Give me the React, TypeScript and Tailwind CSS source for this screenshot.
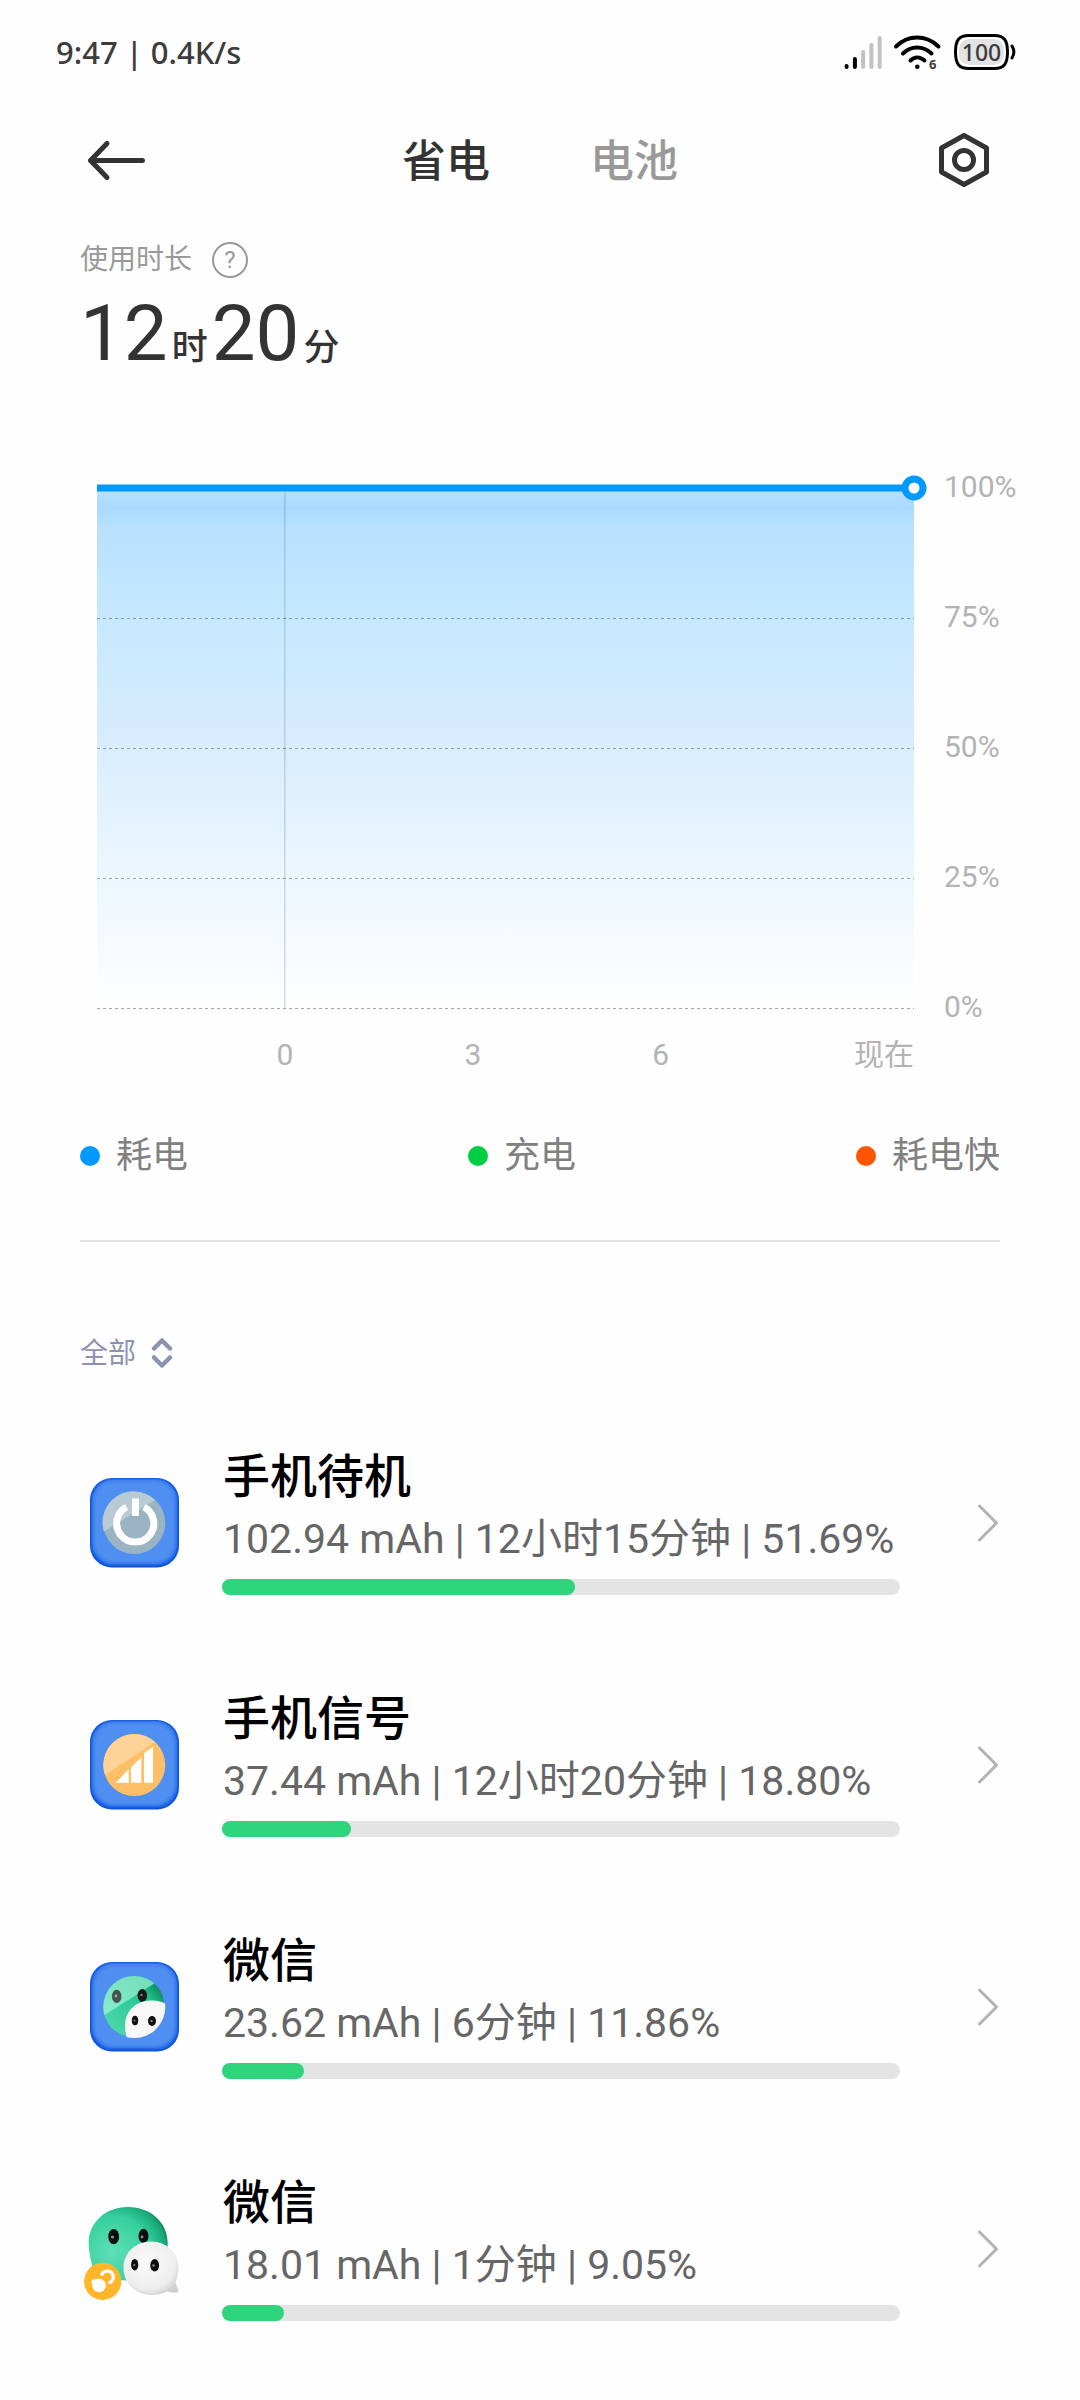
import type { ReactNode } from 'react'

type Usage = {
    id: string
    name: string
    detail: string
    fill: number
    icon: ReactNode
}

const BlueTile = () => (
    <>
        <rect x="10" y="9" width="89" height="89.5" rx="22" fill="#0a55e2"/>
        <rect x="11.2" y="9.6" width="86.6" height="87" rx="21.5" fill="#2468e8"/>
        <rect x="12.4" y="10.4" width="84.2" height="84.6" rx="21" fill="#3a7dec"/>
        <rect x="14" y="11.6" width="81" height="82" rx="20" fill="#4787ee"/>
        <rect x="16" y="14" width="77" height="78" rx="18" fill="#4f8ff1"/>
    </>
)

const StandbyIcon = () => (
    <svg viewBox="0 0 108 108" className="size-27 shrink-0" aria-hidden="true">
        <BlueTile/>
        <circle cx="54.3" cy="54" r="31" fill="#9bb4c4"/>
        <path d="M23.9 62.5 A31 31 0 0 1 75 31 Z" fill="#b8cad4"/>
        <path d="M46.5 38 A18.6 18.6 0 1 0 64 38" fill="none" stroke="#fff" strokeWidth="7"/>
        <rect x="52" y="29.5" width="7" height="17.5" fill="#fff"/>
    </svg>
)

const SignalIcon = () => (
    <svg viewBox="0 0 108 108" className="size-27 shrink-0" aria-hidden="true">
        <BlueTile/>
        <circle cx="54.3" cy="54" r="31" fill="#febf66"/>
        <path d="M25 64 A31 31 0 0 1 75 31 Z" fill="#ffd297"/>
        <path d="M35.7 71.7 L48.7 58.3 V71.7 Z M51 56.3 L61.3 46.3 V71.7 H51 Z M64 42.3 L73 35.7 V71.7 H64 Z" fill="#fff"/>
    </svg>
)

const WechatTileIcon = () => (
    <svg viewBox="0 0 108 108" className="size-27 shrink-0" aria-hidden="true">
        <defs>
            <clipPath id="face">
                <circle cx="54.3" cy="54" r="31"/>
            </clipPath>
            <linearGradient id="faceGreen" x1="0" y1="1" x2="1" y2="0.2">
                <stop offset="0" stopColor="#56dcae"/>
                <stop offset="0.75" stopColor="#22c592"/>
                <stop offset="1" stopColor="#0b7a50"/>
            </linearGradient>
            <linearGradient id="faceShine" x1="0" y1="1" x2="1" y2="0">
                <stop offset="0" stopColor="#8aeccd"/>
                <stop offset="1" stopColor="#6fdcb7"/>
            </linearGradient>
        </defs>
        <BlueTile/>
        <g clipPath="url(#face)">
            <circle cx="53.5" cy="53" r="31" fill="url(#faceGreen)"/>
            <path d="M20 65 L75 30 L60 15 H20 Z" fill="url(#faceShine)"/>
            <ellipse cx="36.7" cy="43.3" rx="4.8" ry="6.6" fill="#46544f"/>
            <ellipse cx="62.3" cy="42.5" rx="4.8" ry="6.4" fill="#141a18"/>
            <circle cx="36" cy="43" r="1.4" fill="#9aa8a3"/>
            <circle cx="61.5" cy="42" r="1.3" fill="#777"/>
            <path d="M86 51 C78 46 62 46 53 54 C44 62 43 75 48 88 H90 V51 Z" fill="#f8f8f8"/>
            <ellipse cx="55" cy="67.5" rx="3.2" ry="4.8" fill="#111"/>
            <ellipse cx="72" cy="68" rx="4" ry="5" fill="#111"/>
            <circle cx="54.5" cy="67.5" r="1" fill="#888"/>
            <circle cx="71.5" cy="68" r="1.2" fill="#888"/>
        </g>
    </svg>
)

const WechatIcon = () => (
    <svg viewBox="0 0 108 108" className="size-27 shrink-0" aria-hidden="true">
        <defs>
            <radialGradient id="bigBubble" cx="0.3" cy="0.6" r="0.8">
                <stop offset="0" stopColor="#5fe0b8"/>
                <stop offset="0.6" stopColor="#35cf9d"/>
                <stop offset="0.85" stopColor="#16a777"/>
                <stop offset="1" stopColor="#075236"/>
            </radialGradient>
            <radialGradient id="smallBubble" cx="0.45" cy="0.4" r="0.65">
                <stop offset="0" stopColor="#fafafa"/>
                <stop offset="0.75" stopColor="#eeeeee"/>
                <stop offset="1" stopColor="#cfcfcf"/>
            </radialGradient>
        </defs>
        <path d="M48 12 C70 12 87.7 27 87.7 48 C87.7 70 70 85.5 46 85.5 C36 85.5 24 82 12 76 C13.5 70 8.7 62 8.7 48 C8.7 27 26 12 48 12 Z" fill="url(#bigBubble)"/>
        <ellipse cx="33.7" cy="41.7" rx="5.4" ry="7.6" fill="#0a0f0d"/>
        <ellipse cx="63.5" cy="41" rx="5" ry="7.2" fill="#0a0f0d"/>
        <circle cx="32.5" cy="42" r="1.6" fill="#8a8f8d"/>
        <circle cx="62" cy="42" r="1.4" fill="#8a8f8d"/>
        <path d="M71 46.5 C87 46.5 98.5 58 98.5 73 C98.5 79 97 84 95.5 87 C96 91 98.5 94 98.5 96 C98.5 98.5 93 98 87.5 96.5 C82 99 77 100 71 100 C55 100 43.5 88 43.5 73 C43.5 58 55 46.5 71 46.5 Z" fill="url(#smallBubble)"/>
        <ellipse cx="54.7" cy="69.7" rx="3.6" ry="5.8" fill="#0c0c0c"/>
        <ellipse cx="74.7" cy="70.3" rx="4.4" ry="6.2" fill="#0c0c0c"/>
        <circle cx="54.2" cy="70" r="1.1" fill="#8a8a8a"/>
        <circle cx="73.5" cy="70.5" r="1.3" fill="#8a8a8a"/>
        <circle cx="22.7" cy="86.3" r="18.6" fill="#ffb629"/>
        <circle cx="19" cy="90.5" r="6.8" fill="#fff"/>
        <circle cx="14.3" cy="87" r="2.8" fill="#fff"/>
        <path d="M21.5 80.5 A6 6 0 1 1 28.5 88" fill="none" stroke="#fff" strokeWidth="3.4"/>
    </svg>
)

const usages: Usage[] = [
    { id: 'standby', name: '手机待机', detail: '102.94 mAh | 12小时15分钟 | 51.69%', fill: 52.1, icon: <StandbyIcon/> },
    { id: 'signal', name: '手机信号', detail: '37.44 mAh | 12小时20分钟 | 18.80%', fill: 19, icon: <SignalIcon/> },
    { id: 'wechat', name: '微信', detail: '23.62 mAh | 6分钟 | 11.86%', fill: 12.1, icon: <WechatTileIcon/> },
    { id: 'wechat-dual', name: '微信', detail: '18.01 mAh | 1分钟 | 9.05%', fill: 9.2, icon: <WechatIcon/> },
]

const StatusBar = () => (
    <div className="flex h-26 items-center justify-between pr-16 pl-14 text-[#3c3c3c]">
        <span className="font-['Noto_Sans',sans-serif] text-[31px] font-medium">9:47 | 0.4K/s</span>
        <svg width="172" height="40" viewBox="0 0 172 40" aria-hidden="true">
            <g strokeWidth="4" strokeLinecap="round">
                <path d="M2.6 34 V35 M10.9 27 V35" stroke="#000"/>
                <path d="M19.1 20 V35 M27.4 13 V35 M35.7 6 V35" stroke="#c2c2c2"/>
            </g>
            <g fill="none" stroke="#000" strokeWidth="4" strokeLinecap="round">
                <path d="M52 14.5 C64 2.5 82 2.5 94.5 14.5"/>
                <path d="M59 21.5 C67 13.5 79 13.5 87.5 21.5"/>
                <path d="M66.5 28.5 C70.5 24.5 76 24.5 80.5 28.5"/>
            </g>
            <circle cx="73.3" cy="34.7" r="2.3" fill="#000"/>
            <text x="85" y="37" fill="#3c3c3c" className="font-['Noto_Sans',sans-serif] text-[13px] font-bold">6</text>
            <path d="M125 3.5 H150 C160 3.5 163.5 8 163.5 20 C163.5 32 160 36.5 150 36.5 H125 C115 36.5 111.5 32 111.5 20 C111.5 8 115 3.5 125 3.5 Z" fill="#fff" stroke="#000" strokeWidth="3"/>
            <rect x="115" y="7" width="45" height="26" rx="10" fill="#e3e3e3"/>
            <path d="M168 14 C170.5 18 170.5 22 168 26" fill="none" stroke="#000" strokeWidth="3" strokeLinecap="round"/>
            <text x="137.5" y="29" textAnchor="middle" fill="#3c3c3c" className="font-['Noto_Sans',sans-serif] text-[23px] font-medium">100</text>
        </svg>
    </div>
)

const Header = () => (
    <header className="flex h-28 items-center justify-between px-20">
        <button type="button" aria-label="返回" className="w-20">
            <svg width="72" height="56" viewBox="0 0 72 56" fill="none" stroke="#333" strokeWidth="5" strokeLinecap="round" strokeLinejoin="round">
                <path d="M62.5 28.5 H10.5 M27 11.5 L10.5 28.5 L27 45.5"/>
            </svg>
        </button>
        <nav className="flex gap-25 pt-1 text-[44px] font-medium">
            <button type="button" className="text-[#333]">省电</button>
            <button type="button" className="text-[#999]">电池</button>
        </nav>
        <button type="button" aria-label="设置" className="w-20">
            <svg width="80" height="60" viewBox="0 0 80 60" fill="none" stroke="#333" strokeWidth="5" strokeLinejoin="round">
                <path d="M44 5.5 L66.5 18 V42 L44 54.5 L21.5 42 V18 Z"/>
                <circle cx="44" cy="30" r="9.5"/>
            </svg>
        </button>
    </header>
)

const Chart = () => (
    <svg className="h-[600px] w-full overflow-visible" role="img" aria-label="耗电">
        <defs>
            <linearGradient id="area" x1="0" y1="0" x2="0" y2="1">
                <stop offset="0" stopColor="#b8e1ff"/>
                <stop offset="0.038" stopColor="#a9daff"/>
                <stop offset="0.075" stopColor="#b7e1ff"/>
                <stop offset="0.23" stopColor="#c5e8ff"/>
                <stop offset="0.44" stopColor="#d4ebfe"/>
                <stop offset="0.75" stopColor="#edf7ff"/>
                <stop offset="1" stopColor="#fefefe"/>
            </linearGradient>
        </defs>
        <rect x="0" y="0" width="100%" height="520" fill="url(#area)"/>
        <line x1="23%" x2="23%" y1="0" y2="520" stroke="#33556f" strokeOpacity="0.3"/>
        {[130, 260, 390, 520].map((y) => (
            <line key={y} x1="0" x2="100%" y1={y + 0.5} y2={y + 0.5} stroke="#222" strokeOpacity="0.4" strokeDasharray="3 3"/>
        ))}
        <line x1="0" x2="100%" y1="0" y2="0" stroke="#0099ff" strokeWidth="7"/>
        <circle cx="100%" cy="0" r="9" fill="#fff" stroke="#0099ff" strokeWidth="7"/>
        <g fill="#b3b3b3" className="text-[30px]">
            {['100%', '75%', '50%', '25%', '0%'].map((label, i) => (
                <text key={label} x="100%" dx="30" y={i * 130 + 9}>{label}</text>
            ))}
            <text x="23%" y="577" textAnchor="middle">0</text>
            <text x="46%" y="577" textAnchor="middle">3</text>
            <text x="69%" y="577" textAnchor="middle">6</text>
            <text x="100%" y="577" textAnchor="end">现在</text>
        </g>
    </svg>
)

const UsageRow = ({ item }: { item: Usage }) => (
    <li>
        <a href={`#${item.id}`} className="flex items-center py-[41px]">
            {item.icon}
            <div className="ml-[34px] flex-1 pb-2">
                <h2 className="pl-px text-[47px] leading-17 font-medium text-black">{item.name}</h2>
                <p className="pl-px text-[41px] leading-14 text-[#666]">{item.detail}</p>
                <div className="mt-3 h-4 rounded-full bg-[#e4e4e4]">
                    <div className="h-4 rounded-full bg-[#2fd57d]" style={{ width: `${item.fill}%` }}/>
                </div>
            </div>
            <svg width="24" height="40" viewBox="0 0 24 40" className="ml-19 shrink-0" fill="none" stroke="#b3b3b3" strokeWidth="3" strokeLinecap="round" strokeLinejoin="round" aria-hidden="true">
                <path d="M3.5 3 L20.5 20 L3.5 37"/>
            </svg>
        </a>
    </li>
)

const App = () => {
    return (
        <main className="min-h-screen overflow-hidden bg-[#fefefe] font-[Roboto,'Noto_Sans_CJK_SC',sans-serif]">
            <StatusBar/>
            <Header/>

            <section className="px-20 pt-6">
                <div className="flex items-center gap-5 text-[28px] leading-10 text-[#999]">
                    使用时长
                    <button type="button" aria-label="说明" className="flex size-9 items-center justify-center rounded-full border-2 border-[#999] text-2xl">?</button>
                </div>
                <p className="flex items-baseline gap-1 pt-1.5 text-[36px] leading-24 font-medium text-[#333]">
                    <span className="text-[78px] font-normal">12</span>时
                    <span className="text-[78px] font-normal">20</span>分
                </p>
            </section>

            <section className="pt-23 pr-[166px] pl-[97px]">
                <Chart/>
            </section>

            <section className="px-20">
                <div className="flex justify-between border-b-2 border-[#e4e4e4] pt-10 pb-14 text-[36px] leading-14 text-[#808080]">
                    <div className="flex items-center gap-4">
                        <span className="size-5 rounded-full bg-[#0099ff]"/>耗电
                    </div>
                    <div className="flex items-center gap-4">
                        <span className="size-5 rounded-full bg-[#00cc44]"/>充电
                    </div>
                    <div className="flex items-center gap-4">
                        <span className="size-5 rounded-full bg-[#ff5500]"/>耗电快
                    </div>
                </div>

                <button type="button" className="mt-22 flex items-center gap-3.5 text-[28px] leading-12 text-[#8c93b0]">
                    全部
                    <svg width="24" height="36" viewBox="0 0 24 36" fill="none" stroke="currentColor" strokeWidth="4.5" strokeLinecap="round" strokeLinejoin="round" aria-hidden="true">
                        <path d="M4 12.5 L12 4.5 L20 12.5 M4 21.5 L12 29.5 L20 21.5"/>
                    </svg>
                </button>

                <ul className="mt-6">
                    {usages.map((item) => <UsageRow key={item.id} item={item}/>)}
                </ul>
            </section>
        </main>
    )
}

export default App
